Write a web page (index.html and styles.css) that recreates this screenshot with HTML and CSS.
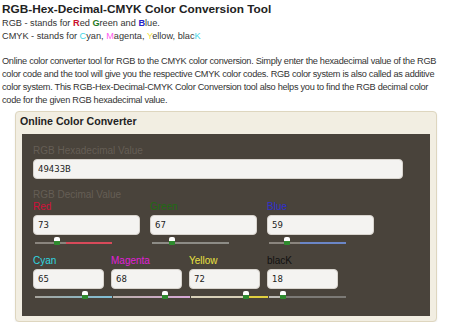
FILE: index.html
```html
<!DOCTYPE html>
<html lang="en">
<head>
<meta charset="UTF-8">
<meta name="viewport" content="width=device-width, initial-scale=1.0">
<title>RGB-Hex-Decimal-CMYK Color Conversion Tool</title>
<link rel="stylesheet" href="styles.css">
</head>
<body>
<h1 class="title">RGB-Hex-Decimal-CMYK Color Conversion Tool</h1>
<p class="legend">
  RGB - stands for <b class="c-red">R</b>ed <b class="c-green">G</b>reen and <b class="c-blue">B</b>lue.<br>
  CMYK - stands for <span class="c-cyan">C</span>yan, <span class="c-magenta">M</span>agenta, <span class="c-yellow">Y</span>ellow, blac<span class="c-cyan">K</span>
</p>
<p class="intro">Online color converter tool for RGB to the CMYK color conversion. Simply enter the hexadecimal value of the RGB color code and the tool will give you the respective CMYK color codes. RGB color system is also called as additive color system. This RGB-Hex-Decimal-CMYK Color Conversion tool also helps you to find the RGB decimal color code for the given RGB hexadecimal value.</p>

<div class="panel">
  <h2 class="panel-title">Online Color Converter</h2>
  <div class="swatch">
    <div class="field-label">RGB Hexadecimal Value</div>
    <input class="text-input hex" type="text" value="49433B">

    <div class="group-label">RGB Decimal Value</div>
    <div class="row rgb">
      <div class="channel">
        <div class="ch-name red">Red</div>
        <input class="text-input" type="text" value="73">
        <div class="slider track-red"><span class="knob" style="left:28.6%"></span></div>
      </div>
      <div class="channel">
        <div class="ch-name green">Green</div>
        <input class="text-input" type="text" value="67">
        <div class="slider track-green"><span class="knob" style="left:26.3%"></span></div>
      </div>
      <div class="channel">
        <div class="ch-name blue">Blue</div>
        <input class="text-input" type="text" value="59">
        <div class="slider track-blue"><span class="knob" style="left:23.1%"></span></div>
      </div>
    </div>

    <div class="row cmyk">
      <div class="channel">
        <div class="ch-name cyan">Cyan</div>
        <input class="text-input" type="text" value="65">
        <div class="slider track-cyan"><span class="knob" style="left:65%"></span></div>
      </div>
      <div class="channel">
        <div class="ch-name magenta">Magenta</div>
        <input class="text-input" type="text" value="68">
        <div class="slider track-magenta"><span class="knob" style="left:68%"></span></div>
      </div>
      <div class="channel">
        <div class="ch-name yellow">Yellow</div>
        <input class="text-input" type="text" value="72">
        <div class="slider track-yellow"><span class="knob" style="left:72%"></span></div>
      </div>
      <div class="channel">
        <div class="ch-name black">blacK</div>
        <input class="text-input" type="text" value="18">
        <div class="slider track-black"><span class="knob" style="left:18%"></span></div>
      </div>
    </div>
  </div>
</div>
</body>
</html>
```

FILE: styles.css
```css
body {
  margin: 0;
  padding: 0 2px;
  background-color: #fff;
  color: #333;
  font-family: "Liberation Sans", Arial, sans-serif;
  font-size: 9.2px;
}
.title {
  margin: 0;
  padding-top: 1px;
  font-size: 11.8px;
  line-height: 16px;
  color: #222;
}
.legend {
  margin: 0;
  line-height: 13px;
}
.intro {
  margin: 12px 0 0;
  line-height: 13px;
  letter-spacing: -0.28px;
}
.c-red { color: #c8102e; }
.c-green { color: #1f7a1f; }
.c-blue { color: #2424c8; }
.c-cyan { color: #3fd6e6; }
.c-magenta { color: #ff5cf0; }
.c-yellow { color: #f0e040; }

.panel {
  margin: 4px 11px 0 13px;
  padding: 3px 6px 5px;
  background-color: #f2eee2;
  border: 1px solid #ded6bf;
  border-radius: 4px;
  box-shadow: 0 1px 2px rgba(0,0,0,0.08);
}
.panel-title {
  margin: 0 0 6px -2px;
  font-size: 10.6px;
  line-height: 13px;
  color: #222;
}
.swatch {
  height: 182px;
  padding: 10px 0 0 11px;
  box-sizing: border-box;
  background-color: #49433b;
}
.field-label,
.group-label {
  font-size: 10px;
  line-height: 13px;
  color: #655e55;
}
.group-label {
  margin-top: 10px;
  line-height: 12px;
}
.text-input {
  display: block;
  box-sizing: border-box;
  height: 20px;
  padding: 0 4px;
  border: 1px solid #d8d4ce;
  border-radius: 4px;
  background-color: #f4f3f1;
  font-family: "DejaVu Sans", Tahoma, sans-serif;
  font-size: 8.5px;
  color: #222;
  outline: none;
}
.hex {
  width: 370px;
  margin-top: 2px;
}
.row {
  display: flex;
}
.rgb .channel { width: 117px; }
.rgb .text-input { width: 107px; }
.cmyk { margin-top: 11px; }
.cmyk .channel { width: 78px; }
.cmyk .text-input { width: 71px; }

.ch-name {
  font-size: 10px;
  line-height: 12px;
  margin-bottom: 2px;
}
.red { color: #d0103a; }
.green { color: #1e6b12; }
.blue { color: #2f2fcf; }
.cyan { color: #30d8e0; }
.magenta { color: #e020d8; }
.yellow { color: #e8e040; }
.black { color: #111; }

.slider {
  position: relative;
  width: 77px;
  height: 2px;
  margin: 7px 0 0 2px;
}
.track-red { background: linear-gradient(to right, #8a857e 40%, #d84a5a 40%); }
.track-green { background: #8d8c86; }
.track-blue { background: linear-gradient(to right, #8a857e 40%, #6b86c7 40%); }
.track-cyan { background: linear-gradient(to right, #a7a49c, #7fc0d8); }
.track-magenta { background: linear-gradient(to right, #b9b0a8, #d8a8d8); }
.track-yellow { background: linear-gradient(to right, #d8d0b8 72%, #e0cf40 72%); }
.track-black { background: linear-gradient(to right, #bdbbb6 18%, #7c7a76 18%); }
.knob {
  position: absolute;
  top: -5px;
  width: 6px;
  height: 8px;
  margin-left: -3px;
  border-radius: 2px 2px 1px 1px;
  background: linear-gradient(#fff 55%, #2e8a2e 55%);
}
```
